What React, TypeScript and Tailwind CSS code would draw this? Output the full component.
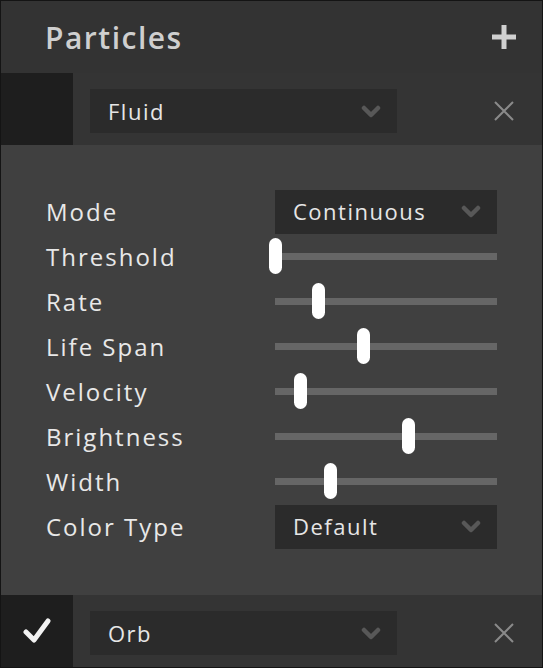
import React from "react";

const font = { fontFamily: "'Open Sans', Lato, sans-serif" };

function Chevron() {
  return (
    <svg width="20" height="13" viewBox="0 0 20 13">
      <polyline points="3,3 10,10 17,3" fill="none" stroke="#585858" strokeWidth="4.5" strokeLinecap="round" strokeLinejoin="round" />
    </svg>
  );
}

function Close() {
  return (
    <svg width="20" height="20" viewBox="0 0 20 20">
      <path d="M1 1 L19 19 M19 1 L1 19" stroke="#8a8a8a" strokeWidth="2" />
    </svg>
  );
}

function Select({ label, width }: { label: string; width: string }) {
  return (
    <div className={`${width} h-[44px] bg-[#2b2b2b] flex items-center justify-between pl-[18px] pr-[16px]`}>
      <span className="text-[22px] text-[#e6e6e6] tracking-[1.5px]">{label}</span>
      <Chevron />
    </div>
  );
}

function Slider({ value }: { value: number }) {
  return (
    <div className="relative w-[222px] h-[45px] flex items-center">
      <div className="w-full h-[7px] bg-[#666666]" />
      <div
        className="absolute top-[4px] w-[13px] h-[36px] rounded-full bg-white"
        style={{ left: `${value * 222 - 6.5}px` }}
      />
    </div>
  );
}

function ItemRow({ name, checked }: { name: string; checked: boolean }) {
  return (
    <div className="h-[72px] flex bg-[#343434]">
      <div className="w-[72px] h-full bg-[#1e1e1e] flex items-center justify-center">
        {checked && (
          <svg width="28" height="26" viewBox="0 0 28 26">
            <path d="M3 14 L11 22 L25 3" fill="none" stroke="#f2f2f2" strokeWidth="5" strokeLinecap="round" strokeLinejoin="round" />
          </svg>
        )}
      </div>
      <div className="flex-1 flex items-center pl-[17px] pr-[28px] pt-[4px] justify-between">
        <Select label={name} width="w-[307px]" />
        <Close />
      </div>
    </div>
  );
}

const rows: { label: string; kind: "select" | "slider"; value?: number; text?: string }[] = [
  { label: "Mode", kind: "select", text: "Continuous" },
  { label: "Threshold", kind: "slider", value: 0 },
  { label: "Rate", kind: "slider", value: 0.195 },
  { label: "Life Span", kind: "slider", value: 0.4 },
  { label: "Velocity", kind: "slider", value: 0.115 },
  { label: "Brightness", kind: "slider", value: 0.6 },
  { label: "Width", kind: "slider", value: 0.25 },
  { label: "Color Type", kind: "select", text: "Default" },
];

export default function App() {
  return (
    <div style={font} className="w-[543px] h-[668px] border border-[#141414] bg-[#333333] flex flex-col overflow-hidden">
      <div className="h-[72px] flex items-center justify-between pl-[44px] pr-[26px]">
        <span className="text-[30px] font-semibold text-[#cfcfcf] tracking-[1.5px]">Particles</span>
        <svg width="24" height="24" viewBox="0 0 24 24">
          <path d="M12 0 V24 M0 12 H24" stroke="#d0d0d0" strokeWidth="5" />
        </svg>
      </div>
      <ItemRow name="Fluid" checked={false} />
      <div className="flex-1 bg-[#404040] pt-[44px] pl-[45px] pr-[45px]">
        {rows.map((r) => (
          <div key={r.label} className="h-[45px] flex items-center justify-between">
            <span className="text-[24px] text-[#e8e8e8] tracking-[2px]">{r.label}</span>
            {r.kind === "select" ? (
              <Select label={r.text!} width="w-[222px]" />
            ) : (
              <Slider value={r.value!} />
            )}
          </div>
        ))}
      </div>
      <ItemRow name="Orb" checked={true} />
    </div>
  );
}
